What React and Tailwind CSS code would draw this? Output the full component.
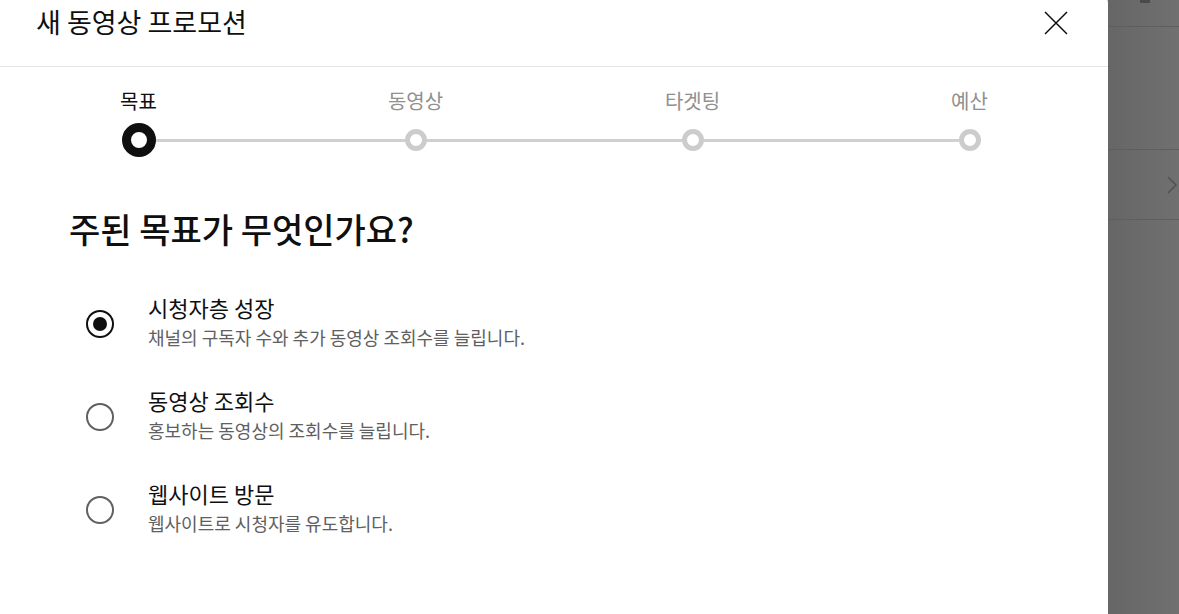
import React from 'react';

const font = { fontFamily: '"Noto Sans CJK KR", "Noto Sans", sans-serif' };

const steps = ['목표', '동영상', '타겟팅', '예산'];

const goals = [
  { title: '시청자층 성장', desc: '채널의 구독자 수와 추가 동영상 조회수를 늘립니다.', checked: true },
  { title: '동영상 조회수', desc: '홍보하는 동영상의 조회수를 늘립니다.', checked: false },
  { title: '웹사이트 방문', desc: '웹사이트로 시청자를 유도합니다.', checked: false },
];

const Stepper = () => (
  <div className="grid grid-cols-4 pt-[21px]">
    {steps.map((label, i) => (
      <div key={label} className="flex flex-col items-center">
        <span
          className={`text-[20px] leading-[26px] ${i === 0 ? 'text-[#0f0f0f]' : 'text-[#909090]'}`}
        >
          {label}
        </span>
        <div className="mt-[9px] flex h-[34px] w-full items-center">
          <div className={`h-[3px] flex-1 ${i === 0 ? 'bg-transparent' : 'bg-[#d0d0d0]'}`} />
          {i === 0 ? (
            <div className="h-[34px] w-[34px] rounded-full border-[9px] border-[#0f0f0f] bg-white" />
          ) : (
            <div className="h-[22px] w-[22px] rounded-full border-[5px] border-[#cccccc] bg-white" />
          )}
          <div className={`h-[3px] flex-1 ${i === steps.length - 1 ? 'bg-transparent' : 'bg-[#d0d0d0]'}`} />
        </div>
      </div>
    ))}
  </div>
);

const Radio = ({ checked }) => (
  <div
    className={`flex h-[28px] w-[28px] shrink-0 items-center justify-center rounded-full border-[2.5px] ${
      checked ? 'border-[#0f0f0f]' : 'border-[#606060]'
    }`}
  >
    {checked && <div className="h-[14px] w-[14px] rounded-full bg-[#0f0f0f]" />}
  </div>
);

export default function App() {
  return (
    <div className="flex h-[614px] w-[1179px] overflow-hidden bg-[#6b6b6b]" style={font}>
      {/* dialog */}
      <div className="-mt-[8px] h-[630px] w-[1108px] shrink-0 rounded-tr-[12px] bg-white shadow-[1px_0_0_#a8a8a8]">
        <div className="flex h-[75px] items-start justify-between border-b border-[#e5e5e5] pl-[36px] pr-[38px] pt-[13px]">
          <h1 className="text-[27px] font-normal leading-[34px] text-[#0f0f0f]">새 동영상 프로모션</h1>
          <button className="mt-[4px] flex h-[28px] w-[28px] items-center justify-center text-[#0f0f0f]">
            <svg width="26" height="26" viewBox="0 0 26 26" fill="none" stroke="currentColor" strokeWidth="1.5">
              <path d="M2 2 L24 24 M24 2 L2 24" />
            </svg>
          </button>
        </div>

        <Stepper />

        <h2 className="mt-[51px] pl-[69px] text-[34px] font-medium leading-[42px] text-[#0f0f0f]">
          주된 목표가 무엇인가요?
        </h2>

        <div className="mt-[42px] flex flex-col gap-[36px] pl-[86px]">
          {goals.map((g) => (
            <label key={g.title} className="flex items-center gap-[34px]">
              <div className="mt-[7px]">
                <Radio checked={g.checked} />
              </div>
              <div className="flex flex-col">
                <span className="text-[22px] leading-[30px] text-[#0f0f0f]">{g.title}</span>
                <span className="mt-[3px] text-[18px] leading-[24px] text-[#606060]">{g.desc}</span>
              </div>
            </label>
          ))}
        </div>
      </div>

      {/* page behind the dialog */}
      <div className="flex flex-1 flex-col bg-gradient-to-r from-[#666666] to-[#707070]">
        <div className="h-[27px] border-b border-[#5e5e5e] pl-[32px]">
          <div className="h-[3px] w-[10px] bg-[#4a4a4a]" />
        </div>
        <div className="h-[123px] border-b border-[#5e5e5e]" />
        <div className="flex h-[70px] items-center justify-end border-b border-[#5e5e5e] pr-[2px]">
          <svg width="10" height="18" viewBox="0 0 10 18" fill="none" stroke="#505050" strokeWidth="1.4">
            <path d="M1 1 L9 9 L1 17" />
          </svg>
        </div>
      </div>
    </div>
  );
}
